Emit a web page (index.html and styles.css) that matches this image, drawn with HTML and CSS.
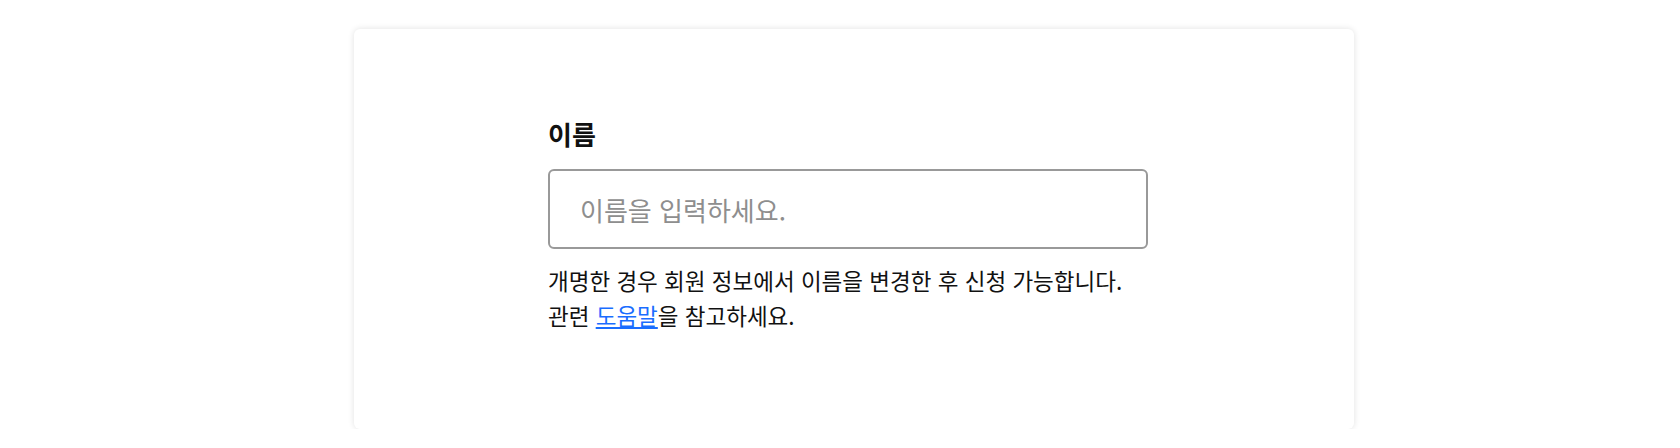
FILE: index.html
```html
<!DOCTYPE html>
<html lang="ko">
<head>
<meta charset="utf-8">
<link rel="stylesheet" href="styles.css">
</head>
<body>
<div class="page">
  <div class="card">
    <div class="field">
      <label class="label" for="name">이름</label>
      <input id="name" class="input" type="text" placeholder="이름을 입력하세요.">
      <p class="help">개명한 경우 회원 정보에서 이름을 변경한 후 신청 가능합니다.<br>관련 <a href="#" class="link">도움말</a>을 참고하세요.</p>
    </div>
  </div>
</div>
</body>
</html>
```
FILE: styles.css
```css
html, body {
  margin: 0;
  padding: 0;
  background: #ffffff;
}
body {
  font-family: "Noto Sans CJK KR", "Noto Sans", sans-serif;
  color: #111;
}
.page {
  padding: 29px 0 0 354px;
}
.card {
  box-sizing: border-box;
  width: 1000px;
  height: 400px;
  background: #fff;
  border-radius: 6px;
  box-shadow: 0 0 6px rgba(0, 0, 0, 0.12);
  padding: 86px 0 0 194px;
}
.field {
  width: 600px;
  display: flex;
  flex-direction: column;
}
.label {
  font-size: 26px;
  font-weight: 700;
  line-height: 38px;
  color: #111;
}
.input {
  box-sizing: border-box;
  margin-top: 16px;
  width: 600px;
  height: 80px;
  border: 2px solid #999;
  border-radius: 6px;
  padding: 0 30px;
  font-family: inherit;
  font-size: 26px;
  color: #111;
  outline: none;
}
.input::placeholder {
  color: #8e8e8e;
}
.help {
  margin: 14px 0 0;
  font-size: 22.5px;
  line-height: 35px;
  color: #111;
}
.link {
  color: #1a6dff;
  text-decoration: underline;
}
```
